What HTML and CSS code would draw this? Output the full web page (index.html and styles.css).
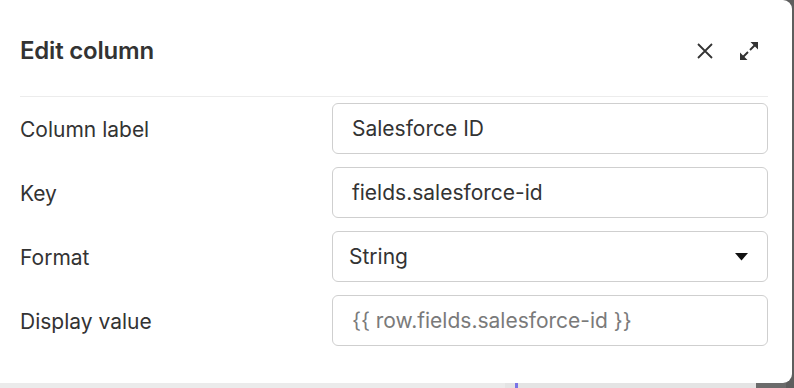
FILE: index.html
```html
<!DOCTYPE html>
<html>
  <head>
    <meta charset="utf-8"/>
    <link rel="stylesheet" href="styles.css">
  </head>
  <body>
    <div class="dialog">
      <div class="dialog-header">
        <h2 class="dialog-title">Edit column</h2>
        <div class="dialog-actions">
          <button class="icon-btn" aria-label="Close">
            <svg width="16" height="16" viewBox="0 0 16 16">
              <path d="M1 1 L15 15 M15 1 L1 15" stroke="#333" stroke-width="1.8" fill="none"/>
            </svg>
          </button>
          <button class="icon-btn" aria-label="Expand">
            <svg width="20" height="20" viewBox="0 0 20 20">
              <path d="M11 9 L17.5 2.5 M2.5 17.5 L9 11" stroke="#333" stroke-width="1.9" fill="none"/>
              <path d="M11.5 1 L19 1 L19 8.5 Z M1 11.5 L1 19 L8.5 19 Z" fill="#333"/>
            </svg>
          </button>
        </div>
      </div>
      <div class="form">
        <label class="form-label">Column label</label>
        <div class="field">Salesforce ID</div>

        <label class="form-label">Key</label>
        <div class="field">fields.salesforce-id</div>

        <label class="form-label">Format</label>
        <div class="field field-select">
          <span>String</span>
          <svg class="caret" width="13" height="8" viewBox="0 0 13 8">
            <path d="M0 0 L13 0 L6.5 7.5 Z" fill="#111"/>
          </svg>
        </div>

        <label class="form-label">Display value</label>
        <div class="field field-placeholder">{{ row.fields.salesforce-id }}</div>
      </div>
    </div>
    <div class="page-strip">
      <div class="strip-light"></div>
      <div class="strip-mark"></div>
      <div class="strip-mid"></div>
      <div class="strip-dark"></div>
    </div>
  </body>
</html>
```

FILE: styles.css
```css
html, body {
  margin: 0;
  padding: 0;
}
body {
  width: 794px;
  height: 388px;
  overflow: hidden;
  background: #5e5e5e;
  font-family: Inter, "Liberation Sans", Arial, sans-serif;
  color: #333;
}
.dialog {
  width: 792px;
  height: 383px;
  background: #fff;
  border-radius: 0 9px 9px 0;
  box-sizing: border-box;
  padding: 0 24px 0 20px;
}
.dialog-header {
  height: 97px;
  display: flex;
  align-items: center;
  justify-content: space-between;
  border-bottom: 1px solid #ececec;
  box-sizing: border-box;
  padding-top: 4px;
}
.dialog-title {
  margin: 0;
  font-size: 24px;
  font-weight: 600;
  color: #333;
  letter-spacing: -0.2px;
}
.dialog-actions {
  display: flex;
  align-items: center;
  gap: 26px;
  margin-right: 9px;
  padding-top: 1px;
}
.icon-btn {
  border: none;
  background: none;
  padding: 0;
  display: flex;
}
.form {
  display: grid;
  grid-template-columns: 312px 436px;
  row-gap: 13px;
  padding-top: 6px;
}
.form-label {
  display: flex;
  align-items: center;
  font-size: 21px;
  color: #333;
  padding-top: 1px;
}
.field {
  height: 51px;
  box-sizing: border-box;
  border: 1px solid #cfcfcf;
  border-radius: 6px;
  display: flex;
  align-items: center;
  padding: 0 19px;
  font-size: 21px;
  color: #333;
}
.field-select {
  justify-content: space-between;
  padding: 0 19px 0 16px;
}
.field-placeholder {
  color: #7a7a7a;
}
.page-strip {
  display: flex;
  height: 5px;
}
.strip-light {
  width: 505px;
  background: #ebebeb;
}
.strip-mark {
  width: 13px;
  background: #e4e4e4;
  box-shadow: inset -3px 0 0 #7a74e6;
}
.strip-mid {
  width: 238px;
  background: #e4e4e4;
}
.strip-dark {
  width: 30px;
  background: #6b6b6b;
}
```
